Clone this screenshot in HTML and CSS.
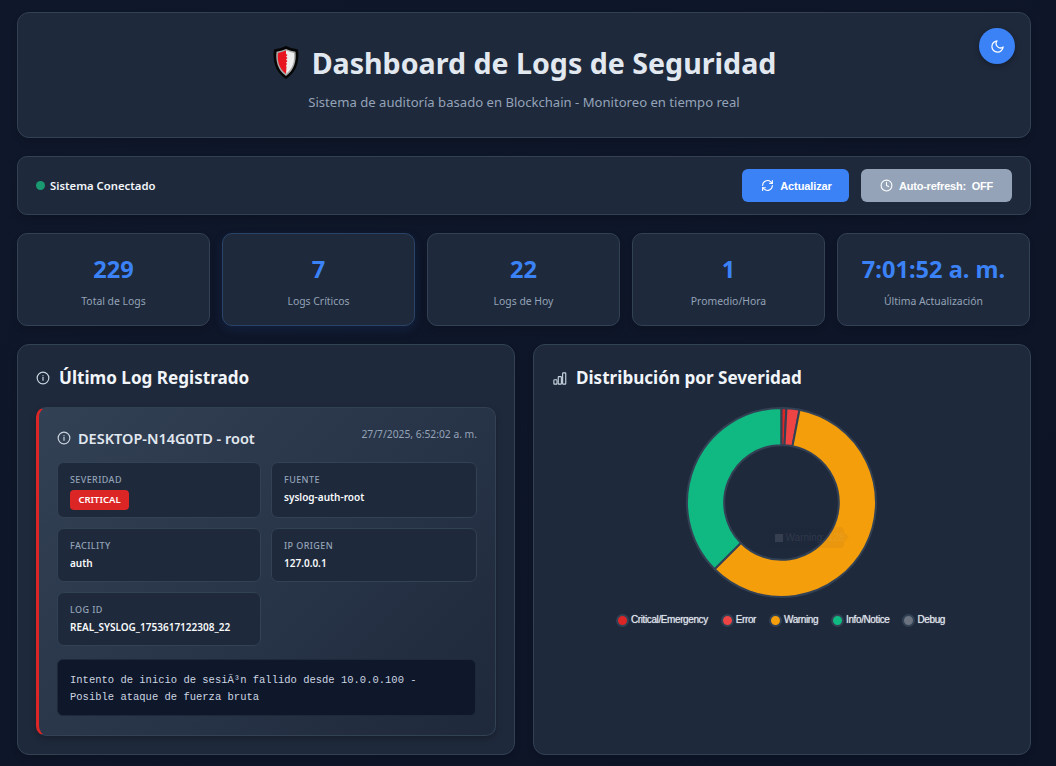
FILE: index.html
```html
<!DOCTYPE html>
<html lang="es">
<head>
<meta charset="utf-8">
<title>Dashboard de Logs de Seguridad</title>
<link rel="stylesheet" href="styles.css">
</head>
<body>
<div class="page">
  <header class="hero">
    <h1 class="hero-title">
      <svg class="shield" viewBox="0 0 26 33" width="26" height="33">
        <path d="M13 0 C17 2 21 2.500 25 3.500 C26.500 15 24 26 13 33 C2 26 -.5 15 1 3.500 C5 2.500 9 2 13 0Z" fill="#050505"/>
        <path d="M13 3 C16.500 4.500 19.500 5 22.500 5.800 C23.500 15 21.500 24 13 30 C4.500 24 2.500 15 3.500 5.800 C6.500 5 9.500 4.500 13 3Z" fill="#a9a9a9"/>
        <path d="M13 4.500 C16 5.800 18.500 6.300 21 7 C21.800 15 20 22.500 13 27.800 Z" fill="#ededed"/>
        <path d="M13 4.500 L13 8 L14.500 9 L13 10.500 L14.500 12 L13 13.500 L14.500 15 L13 16.500 L14 18 L13 19.500 L13.500 21 L13 27.800 C6 22.500 4.200 15 5 7 C7.500 6.300 10 5.800 13 4.500Z" fill="#e8141f"/>
      </svg>
      <span>Dashboard de Logs de Seguridad</span>
    </h1>
    <p class="hero-sub">Sistema de auditoría basado en Blockchain - Monitoreo en tiempo real</p>
    <button class="theme-btn" aria-label="Tema">
      <svg viewBox="0 0 24 24" width="15" height="15" class="ico"><path d="M21 12.790A9 9 0 1 1 11.210 3 7 7 0 0 0 21 12.790z"/></svg>
    </button>
  </header>

  <section class="toolbar">
    <div class="status"><span class="dot"></span><span>Sistema Conectado</span></div>
    <div class="actions">
      <button class="btn btn-blue">
        <svg viewBox="0 0 24 24" width="13" height="13" class="ico"><path d="M3 12a9 9 0 0 1 15-6.700L21 8"/><path d="M21 3v5h-5"/><path d="M21 12a9 9 0 0 1-15 6.700L3 16"/><path d="M8 16H3v5"/></svg>
        <span>Actualizar</span>
      </button>
      <button class="btn btn-gray">
        <svg viewBox="0 0 24 24" width="13" height="13" class="ico"><circle cx="12" cy="12" r="10"/><path d="M12 6v6l4 2"/></svg>
        <span>Auto-refresh:&nbsp; OFF</span>
      </button>
    </div>
  </section>

  <section class="stats">
    <div class="stat"><div class="stat-num">229</div><div class="stat-label">Total de Logs</div></div>
    <div class="stat stat-hover"><div class="stat-num">7</div><div class="stat-label">Logs Críticos</div></div>
    <div class="stat"><div class="stat-num">22</div><div class="stat-label">Logs de Hoy</div></div>
    <div class="stat"><div class="stat-num">1</div><div class="stat-label">Promedio/Hora</div></div>
    <div class="stat"><div class="stat-num">7:01:52 a. m.</div><div class="stat-label">Última Actualización</div></div>
  </section>

  <section class="panels">
    <article class="panel">
      <h2 class="panel-title">
        <svg viewBox="0 0 24 24" width="14" height="14" class="ico"><circle cx="12" cy="12" r="10"/><path d="M12 16v-5"/><path d="M12 8h.01"/></svg>
        <span>Último Log Registrado</span>
      </h2>
      <div class="log">
        <div class="log-head">
          <h3 class="log-host">
            <svg viewBox="0 0 24 24" width="14" height="14" class="ico"><circle cx="12" cy="12" r="10"/><path d="M12 16v-5"/><path d="M12 8h.01"/></svg>
            <span>DESKTOP-N14G0TD - root</span>
          </h3>
          <div class="log-time">27/7/2025, 6:52:02 a. m.</div>
        </div>
        <div class="log-grid">
          <div class="cell cell-a"><div class="cell-key">SEVERIDAD</div><span class="badge">CRITICAL</span></div>
          <div class="cell cell-a"><div class="cell-key">FUENTE</div><div class="cell-val">syslog-auth-root</div></div>
          <div class="cell cell-b"><div class="cell-key">FACILITY</div><div class="cell-val">auth</div></div>
          <div class="cell cell-b"><div class="cell-key">IP ORIGEN</div><div class="cell-val">127.0.0.1</div></div>
          <div class="cell cell-b"><div class="cell-key">LOG ID</div><div class="cell-val">REAL_SYSLOG_1753617122308_22</div></div>
        </div>
        <div class="log-msg">Intento de inicio de sesiÃ³n fallido desde 10.0.0.100 - Posible ataque de fuerza bruta</div>
      </div>
    </article>

    <article class="panel">
      <h2 class="panel-title">
        <svg viewBox="0 0 24 24" width="15" height="15" class="ico ico-thin"><rect x="3" y="14" width="5" height="7" rx="1"/><rect x="10" y="9" width="5" height="12" rx="1"/><rect x="17" y="3" width="5" height="18" rx="1"/></svg>
        <span>Distribución por Severidad</span>
      </h2>
      <div class="chart">
        <div class="donut-wrap">
          <svg class="donut" viewBox="0 0 192 192" width="193" height="193">
            <g stroke="#334155" stroke-width="2" stroke-linejoin="round">
              <path fill="#10b981" d="M29.530 162.470 A94 94 0 0 1 96 2 L96 39 A57 57 0 0 0 55.690 136.310Z"/>
              <path fill="#dc2626" d="M96 2 A94 94 0 0 1 100.920 2.130 L98.980 39.080 A57 57 0 0 0 96 39Z"/>
              <path fill="#ef4444" d="M100.920 2.130 A94 94 0 0 1 113.940 3.730 L106.880 40.050 A57 57 0 0 0 98.980 39.080Z"/>
              <path fill="#f59e0b" d="M113.940 3.730 A94 94 0 1 1 29.530 162.470 L55.690 136.310 A57 57 0 1 0 106.880 40.050Z"/>
            </g>
          </svg>
          <div class="ghost-tip"><span class="ghost-swatch"></span><span>Warning: 128</span></div>
        </div>
        <ul class="legend">
          <li><span class="swatch sw-crit"></span>Critical/Emergency</li>
          <li><span class="swatch sw-err"></span>Error</li>
          <li><span class="swatch sw-warn"></span>Warning</li>
          <li><span class="swatch sw-info"></span>Info/Notice</li>
          <li><span class="swatch sw-debug"></span>Debug</li>
        </ul>
      </div>
    </article>
  </section>
</div>
</body>
</html>
```

FILE: styles.css
```css
* { box-sizing: border-box; }
html, body { margin: 0; height: 100%; }
body {
  background: linear-gradient(135deg, #0f172a 0%, #0c1426 100%);
  color: #e2e8f0;
  font-family: "Noto Sans", "Open Sans", sans-serif;
  overflow: hidden;
}
.page {
  width: 1056px;
  padding: 12px 25px 0 17px;
  display: flex;
  flex-direction: column;
  gap: 18px;
}
.hero, .toolbar, .stat, .panel {
  background: #1e293b;
  border: 1px solid #334155;
  box-shadow: 0 4px 6px rgba(0, 0, 0, .12);
}
.hero {
  position: relative;
  height: 126px;
  border-radius: 12px;
  padding-top: 28px;
  text-align: center;
}
.hero-title {
  margin: 0;
  display: flex;
  align-items: center;
  justify-content: center;
  gap: 13px;
  font-size: 28.600px;
  line-height: 44px;
  font-weight: 700;
  color: #e2e8f0;
}
.shield { display: block; margin: -2px 0 0 1px; }
.hero-sub {
  margin: 8px 0 0;
  font-size: 13.100px;
  line-height: 18px;
  color: #94a3b8;
}
.theme-btn {
  position: absolute;
  top: 15px;
  right: 15px;
  width: 36px;
  height: 36px;
  border: 0;
  padding: 0;
  border-radius: 50%;
  background: #3b82f6;
  color: #fff;
  display: flex;
  align-items: center;
  justify-content: center;
  box-shadow: 0 2px 6px rgba(0, 0, 0, .3);
}
.ico {
  flex: none;
  fill: none;
  stroke: currentColor;
  stroke-width: 2;
  stroke-linecap: round;
  stroke-linejoin: round;
}
.ico-thin { stroke-width: 1.800; }
.toolbar {
  height: 59px;
  border-radius: 10px;
  padding: 0 18px;
  display: flex;
  align-items: center;
  justify-content: space-between;
}
.status {
  display: flex;
  align-items: center;
  gap: 5px;
  font-size: 11.300px;
  font-weight: 600;
  color: #f1f5f9;
}
.dot {
  width: 9px;
  height: 9px;
  border-radius: 50%;
  background: #1a9a70;
}
.actions { display: flex; gap: 12px; }
.btn {
  height: 33px;
  border: 0;
  border-radius: 6px;
  display: flex;
  align-items: center;
  justify-content: center;
  gap: 6px;
  color: #fff;
  font-family: "Liberation Sans", Arial, sans-serif;
  font-size: 11px;
  font-weight: 700;
}
.btn-blue { width: 107px; background: #3b82f6; padding-left: 8px; letter-spacing: -.1px; }
.btn-gray { width: 151px; background: #94a3b8; letter-spacing: -.2px; }
.stats {
  display: grid;
  grid-template-columns: repeat(5, 193px);
  gap: 12px;
}
.stat {
  height: 93px;
  border-radius: 10px;
  padding-top: 20px;
  text-align: center;
}
.stat-hover {
  border-color: #2a4468;
  box-shadow: 0 4px 10px rgba(30, 64, 120, .25);
}
.stat-num {
  font-size: 23.600px;
  line-height: 30px;
  font-weight: 700;
  color: #3b82f6;
}
.stat-label {
  margin-top: 10px;
  font-size: 10.400px;
  line-height: 14px;
  color: #94a3b8;
}
.panels {
  display: grid;
  grid-template-columns: 498px 498px;
  gap: 18px;
}
.panel {
  height: 411px;
  border-radius: 12px;
  padding: 20px 18px;
}
.panel-title {
  margin: 0;
  display: flex;
  align-items: center;
  gap: 9px;
  font-size: 17.100px;
  line-height: 26px;
  font-weight: 700;
  color: #f1f5f9;
}
.panel-title .ico { color: #cbd5e1; }
.log {
  margin-top: 16px;
  height: 329px;
  border: 1px solid #334155;
  border-left: 3px solid #dc2626;
  border-radius: 10px;
  padding: 18px 18px 0;
  background: linear-gradient(135deg, #334155 0%, #1e293b 100%);
  box-shadow: 0 3px 6px rgba(0, 0, 0, .25);
}
.log-head {
  display: flex;
  justify-content: space-between;
  align-items: flex-start;
  height: 36px;
}
.log-host {
  margin: -1px 0 0;
  display: flex;
  align-items: center;
  gap: 7px;
  font-size: 14.500px;
  line-height: 26px;
  font-weight: 600;
  color: #e2e8f0;
}
.log-host .ico { color: #cbd5e1; }
.log-time {
  margin-top: 1px;
  font-size: 10.300px;
  line-height: 14px;
  color: #94a3b8;
}
.log-grid {
  display: grid;
  grid-template-columns: 204px 206px;
  gap: 10px;
}
.cell {
  background: #1e293b;
  border: 1px solid #334155;
  border-radius: 7px;
  padding: 10px 12px 0;
}
.cell-a { height: 56px; }
.cell-b { height: 54px; }
.cell-key {
  font-size: 9px;
  line-height: 13px;
  letter-spacing: .4px;
  font-weight: 500;
  color: #94a3b8;
}
.cell-val {
  margin-top: 4px;
  font-size: 10px;
  line-height: 14px;
  font-weight: 600;
  color: #f8fafc;
}
.badge {
  display: inline-block;
  margin-top: 2px;
  width: 59px;
  height: 20px;
  border-radius: 4px;
  background: #dc2626;
  color: #fff;
  font-size: 9.500px;
  line-height: 20px;
  font-weight: 600;
  text-align: center;
}
.log-msg {
  margin-top: 13px;
  height: 57px;
  width: 419px;
  padding: 12px 12px;
  border-radius: 6px;
  background: #0f172a;
  border: 1px solid #1e293b;
  color: #cbd5e1;
  font-family: "Liberation Mono", "Courier New", monospace;
  font-size: 10.500px;
  line-height: 17px;
}
.chart {
  display: flex;
  flex-direction: column;
  align-items: center;
  margin-top: 15px;
}
.donut-wrap {
  position: relative;
  width: 193px;
  height: 193px;
  margin-left: -2px;
}
.donut { display: block; }
.ghost-tip {
  position: absolute;
  left: 84px;
  top: 121px;
  width: 75px;
  height: 21px;
  display: flex;
  align-items: center;
  gap: 3px;
  padding-left: 6px;
  border-radius: 4px;
  background: rgba(30, 41, 59, .05);
  font-family: "Liberation Sans", Arial, sans-serif;
  font-size: 10px;
  color: rgba(226, 232, 240, .1);
  white-space: nowrap;
}
.ghost-tip::after {
  content: "";
  position: absolute;
  left: 100%;
  top: 5px;
  border: 5px solid transparent;
  border-left-color: rgba(30, 41, 59, .05);
}
.ghost-swatch {
  flex: none;
  width: 8px;
  height: 8px;
  background: rgba(226, 232, 240, .12);
}
.legend {
  list-style: none;
  margin: 14px 0 0 -3px;
  padding: 0;
  display: flex;
  gap: 13px;
  font-family: "Liberation Sans", Arial, sans-serif;
  font-size: 10px;
  letter-spacing: -.4px;
  line-height: 14px;
  color: #e2e8f0;
  text-shadow: 0 0 1px rgba(226, 232, 240, .7);
}
.legend li { display: flex; align-items: center; gap: 2px; }
.swatch {
  width: 13px;
  height: 13px;
  border-radius: 50%;
  border: 2px solid #334155;
}
.sw-crit { background: #dc2626; }
.sw-err { background: #ef4444; }
.sw-warn { background: #f59e0b; }
.sw-info { background: #10b981; }
.sw-debug { background: #6b7280; }
```
